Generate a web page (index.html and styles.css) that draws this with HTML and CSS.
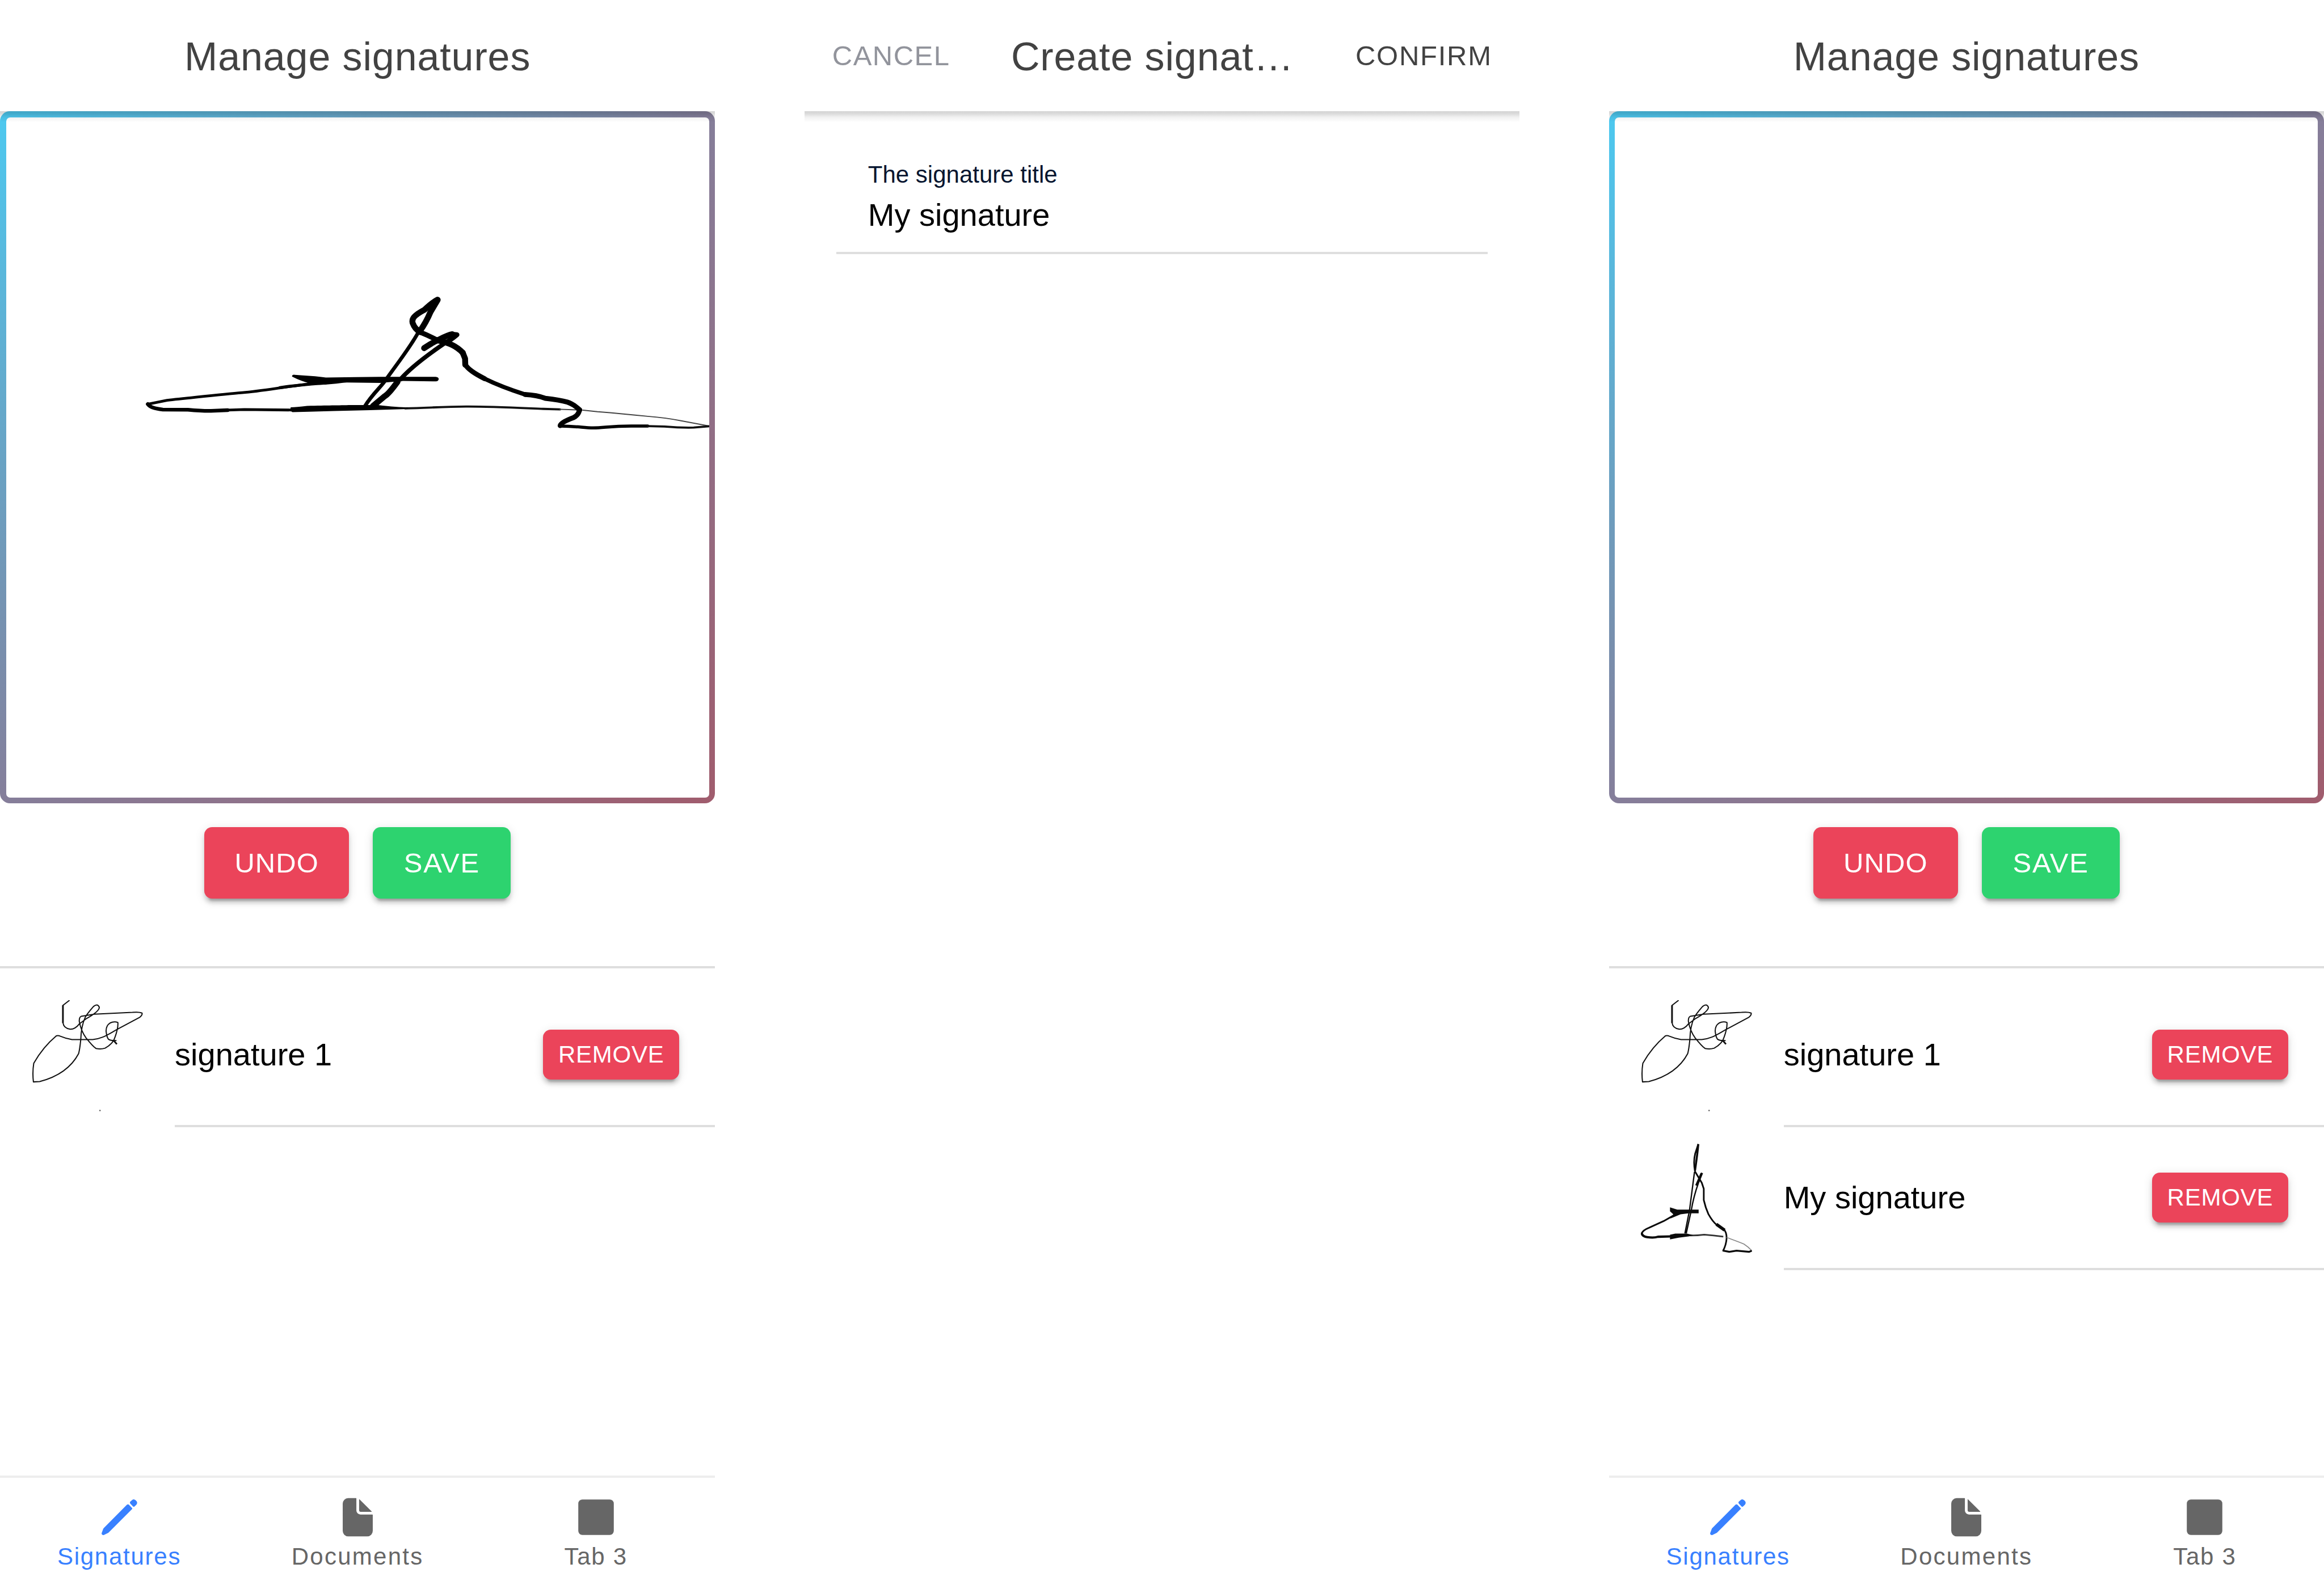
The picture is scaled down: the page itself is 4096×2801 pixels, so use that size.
FILE: index.html
```html
<!DOCTYPE html>
<html lang="en">
<head>
<meta charset="utf-8">
<title>Signatures</title>
<link rel="stylesheet" href="styles.css">
</head>
<body>
<svg class="defs" aria-hidden="true">
  <symbol id="pencil" viewBox="0 0 512 512">
    <path d="M408 51Q423 42 437 51Q448 58 455 66Q464 76 463.500 88Q462 100 454 109L433 129Q424 136 415 129L383 96Q375 86 381 75Z"/>
    <path d="M343 110Q356 99 368 109L405 149Q409 154 405 160L131 434Q128 438 122 441L74 463Q66 467 56 462Q46 455 47 443L66 392Q68 387 73 382Z"/>
  </symbol>
  <symbol id="document" viewBox="0 0 512 512">
    <path d="M428 224H288a48 48 0 01-48-48V36a4 4 0 00-4-4h-92a64 64 0 00-64 64v320a64 64 0 0064 64h224a64 64 0 0064-64V228a4 4 0 00-4-4z"/>
    <path d="M419.220 188.590L275.410 44.780a2 2 0 00-3.410 1.410V176a16 16 0 0016 16h129.810a2 2 0 001.410-3.410z"/>
  </symbol>
  <symbol id="square" viewBox="0 0 512 512">
    <path d="M416 464H96a48 48 0 01-48-48V96a48 48 0 0148-48h320a48 48 0 0148 48v320a48 48 0 01-48 48z"/>
  </symbol>
  <symbol id="sig-one" viewBox="192 162 672 672">
    <g fill="none" stroke="#111" stroke-width="7" stroke-linejoin="round">
      <path d="M420 163L381 193V300Q385 331 425 338Q455 338 480 305L520 275Q600 230 600 205Q590 180 565 200Q530 240 515 265Q490 320 488 400Q482 460 475 485C430 570 350 625 240 654L202 656Q195 600 204 543C240 480 290 420 340 378Q350 373 365 380Q400 395 435 400L560 400C620 395 650 370 715 335L845 265Q862 250 858 240Q840 232 800 236L570 247L490 260Q478 265 479 290Q490 350 520 390Q560 440 580 454Q610 460 635 452Q685 425 695 385Q715 330 712 297Q690 288 665 300Q640 315 641 350Q645 385 655 398Q670 408 704 406"/>
      <path d="M380 193V300" stroke-width="10"/>
      <path d="M684 403L706 428" stroke-width="10"/>
    </g>
    <circle cx="604" cy="829" r="4.500" fill="#666"/>
  </symbol>
  <symbol id="sig-two" viewBox="192 126 672 672">
    <g fill="none" stroke="#0a0a0a" stroke-linejoin="round">
      <path d="M539 132L520 190Q508 240 519 296" stroke-width="10"/>
      <path d="M539 132Q534 190 519 292" stroke-width="12"/>
      <path d="M518 296L560 366L572 402V470Q582 515 600 555Q625 600 650 620" stroke-width="10"/>
      <path d="M648 616L698 652" stroke-width="19"/>
      <path d="M694 648Q710 665 710 700Q708 740 688 778" stroke-width="10"/>
      <path d="M558 308L526 382M562 306L538 366" stroke-width="12"/>
      <path d="M516 300L486 530L458 672M540 366Q510 450 496 535L466 672" stroke-width="8"/>
      <path d="M395 560L330 597L240 638Q205 652 196 672" stroke-width="10"/>
      <path d="M196 668Q200 690 230 694Q270 700 295 692L370 690" stroke-width="14"/>
      <path d="M480 684Q530 685 575 679Q630 683 690 691" stroke="#333" stroke-width="9"/>
      <path d="M710 696Q790 725 815 736Q840 752 862 776" stroke="#888" stroke-width="6"/>
      <path d="M686 775L726 783L770 776L845 783L862 776" stroke-width="11"/>
    </g>
    <path d="M368 514L412 528H541V550H480L432 556L370 582L388 556L368 538ZM368 680L400 673H470L510 682L480 690L420 698L368 708Z" fill="#0a0a0a"/>
  </symbol>
</svg>

<main class="board">
  <section class="screen">
    <header class="toolbar"><h1 class="title">Manage signatures</h1></header>
    <div class="pad">
      <div class="paper">
        <svg class="ink" viewBox="12 236 1416 1370" preserveAspectRatio="none">
          <g transform="translate(260 560) scale(.42091 .33333)" fill="none" stroke="#000" stroke-linecap="round" stroke-linejoin="round">
            <path class="ink-4" d="M880 636C740 655 640 681 540 691S300 722 180 737L86 761"/>
            <path class="ink-5" d="M940 632C860 640 800 645 720 661"/>
            <path class="ink-6" d="M88 760Q100 785 160 793L280 794Q350 802 390 801L470 797"/>
            <path class="ink-4" d="M470 796L550 793L780 796"/>
            <path class="ink-3" d="M1320 786C1430 783 1500 776 1610 775S1880 784 1980 789L2060 792"/>
            <path class="ink-2" d="M2060 792L2140 795M2170 797L2240 806L2300 812L2420 827L2480 834Q2570 843 2640 861L2775 893"/>
            <path class="ink-6" d="M1128 770C1160 705 1200 660 1220 625C1290 500 1345 415 1385 320"/>
            <path class="ink-9" d="M1392 315Q1420 265 1440 205L1475 130"/>
            <path class="ink-9" d="M1473 130Q1445 150 1412 190C1360 225 1350 245 1355 270Q1365 305 1390 325"/>
            <path class="ink-8" d="M1390 325Q1430 345 1475 375"/>
            <path class="ink-9" d="M1475 375C1530 390 1565 410 1595 450"/>
            <path class="ink-9" d="M1595 450L1606 485L1607 522"/>
            <path class="ink-8" d="M1607 522Q1625 560 1700 607"/>
            <path class="ink-7" d="M1700 607Q1783 658 1893 702"/>
            <path class="ink-8" d="M1893 702Q1950 706 1990 725Q2060 735 2095 748Q2125 760 2155 796"/>
            <path class="ink-8" d="M2153 796Q2150 825 2125 842Q2065 870 2061 890"/>
            <path class="ink-5" d="M2061 893C2150 894 2170 904 2220 904S2300 893 2400 893H2480"/>
            <path class="ink-3" d="M2480 893L2560 896Q2640 904 2700 902L2775 894"/>
            <path class="ink-9" d="M1410 422Q1450 388 1480 371Q1525 342 1545 338"/>
            <path class="ink-8" d="M1540 338L1567 341Q1550 360 1520 385"/>
            <path class="ink-7" d="M1505 395C1430 460 1345 540 1297 610"/>
            <path class="ink-9" d="M1283 625Q1240 700 1222 712L1165 772"/>
            <path class="fill" d="M778 594Q778 580 792 583C840 588 900 590 940 600L1080 597L1200 595H1465Q1480 597 1480 609Q1478 622 1466 623L1310 620L1200 632L1040 630C980 636 940 648 880 642Q820 622 778 594Z"/>
            <path class="fill" d="M772 780Q800 778 850 771C950 768 1000 768 1060 766H1190C1250 776 1300 778 1335 781L1330 790L1150 797L980 802L860 806L780 809Q766 800 772 780Z"/>
          </g>
        </svg>
      </div>
    </div>
    <div class="actions">
      <button class="btn btn-undo">UNDO</button>
      <button class="btn btn-save">SAVE</button>
    </div>
    <ul class="list">
      <li class="item">
        <svg class="thumb"><use href="#sig-one"/></svg>
        <div class="item-inner"><span class="item-label">signature 1</span><button class="btn btn-small">REMOVE</button></div>
      </li>
    </ul>
    <nav class="tabs">
      <a class="tab tab-active"><svg class="icon"><use href="#pencil"/></svg><span>Signatures</span></a>
      <a class="tab"><svg class="icon"><use href="#document"/></svg><span class="wide">Documents</span></a>
      <a class="tab"><svg class="icon"><use href="#square"/></svg><span>Tab 3</span></a>
    </nav>
  </section>

  <section class="screen">
    <header class="toolbar toolbar-modal">
      <button class="link link-cancel">CANCEL</button>
      <h1 class="title title-clip">Create signat…</h1>
      <button class="link link-confirm">CONFIRM</button>
    </header>
    <div class="form">
      <label class="field">
        <span class="field-label">The signature title</span>
        <span class="field-value">My signature</span>
      </label>
    </div>
  </section>

  <section class="screen">
    <header class="toolbar"><h1 class="title">Manage signatures</h1></header>
    <div class="pad"><div class="paper"></div></div>
    <div class="actions">
      <button class="btn btn-undo">UNDO</button>
      <button class="btn btn-save">SAVE</button>
    </div>
    <ul class="list">
      <li class="item">
        <svg class="thumb"><use href="#sig-one"/></svg>
        <div class="item-inner"><span class="item-label">signature 1</span><button class="btn btn-small">REMOVE</button></div>
      </li>
      <li class="item">
        <svg class="thumb"><use href="#sig-two"/></svg>
        <div class="item-inner"><span class="item-label">My signature</span><button class="btn btn-small">REMOVE</button></div>
      </li>
    </ul>
    <nav class="tabs">
      <a class="tab tab-active"><svg class="icon"><use href="#pencil"/></svg><span>Signatures</span></a>
      <a class="tab"><svg class="icon"><use href="#document"/></svg><span class="wide">Documents</span></a>
      <a class="tab"><svg class="icon"><use href="#square"/></svg><span>Tab 3</span></a>
    </nav>
  </section>
</main>
</body>
</html>
```
FILE: styles.css
```css
/* 1rem is one device-independent pixel of a 360x800 phone screen */
html {
  font-size: 3.50085px;
}

* {
  box-sizing: border-box;
}

body {
  margin: 0;
  background: #fff;
  color: #000;
  font-family: Arial, "Liberation Sans", sans-serif;
  overflow: hidden;
}

button {
  font-family: inherit;
  border: 0;
  padding: 0;
  margin: 0;
  background: none;
}

.defs {
  display: none;
}

.board {
  display: flex;
  gap: 45rem;
  width: 4096px;
  height: 2801px;
}

.screen {
  display: flex;
  flex-direction: column;
  flex: none;
  width: 360rem;
  height: 800rem;
}

/* header */
.toolbar {
  position: relative;
  display: flex;
  align-items: center;
  justify-content: center;
  flex: none;
  height: 56rem;
}

.toolbar::after {
  content: "";
  position: absolute;
  top: 100%;
  left: 0;
  width: 100%;
  height: 5rem;
  z-index: 1;
  background: linear-gradient(rgba(0, 0, 0, .17), rgba(0, 0, 0, .14) 25%, rgba(0, 0, 0, .05) 60%, rgba(0, 0, 0, .01));
}

.title {
  margin: 0;
  padding-top: 1rem;
  font-size: 20rem;
  line-height: 24rem;
  font-weight: 400;
  letter-spacing: .25rem;
  color: #424242;
  white-space: nowrap;
}

.toolbar-modal {
  justify-content: flex-start;
  padding-left: 14rem;
}

.title-clip {
  width: 173.400rem;
  margin-left: 31rem;
}

.link {
  font-size: 14rem;
  line-height: 18rem;
  letter-spacing: .5rem;
  text-align: left;
  white-space: nowrap;
}

.link-cancel {
  width: 59rem;
  letter-spacing: .42rem;
  color: #92949c;
}

.link-confirm {
  color: #424242;
}

/* drawing area */
.pad {
  flex: none;
  height: 348.500rem;
  padding: 3rem;
  border-radius: 5rem;
  background: linear-gradient(to bottom right, #4cc9f0, #857e9a 50%, #a05c6d);
}

.paper {
  height: 100%;
  border-radius: 2rem;
  background: #fff;
  overflow: hidden;
}

.ink {
  display: block;
  width: 100%;
  height: 100%;
}

.ink path {
  vector-effect: non-scaling-stroke;
}

.ink .ink-2 { stroke-width: 2px; stroke: #444; }
.ink .ink-3 { stroke-width: 3.800px; stroke: #111; }
.ink .ink-4 { stroke-width: 4.800px; }
.ink .ink-5 { stroke-width: 5.500px; }
.ink .ink-6 { stroke-width: 6.500px; }
.ink .ink-7 { stroke-width: 7.500px; }
.ink .ink-8 { stroke-width: 8.800px; }
.ink .ink-9 { stroke-width: 10.400px; }
.ink .fill { fill: #000; stroke: none; }

/* buttons */
.actions {
  display: flex;
  justify-content: center;
  gap: 12rem;
  flex: none;
  padding-top: 12rem;
  height: 82rem;
}

.btn {
  height: 36rem;
  border-radius: 4rem;
  background: #eb445a;
  color: #fff;
  font-size: 14rem;
  line-height: 36rem;
  letter-spacing: .5rem;
  text-align: center;
  white-space: nowrap;
  box-shadow: 0 3rem 1rem -2rem rgba(0, 0, 0, .2), 0 2rem 2rem 0 rgba(0, 0, 0, .14), 0 1rem 5rem 0 rgba(0, 0, 0, .12);
}

.btn-undo {
  width: 73rem;
  letter-spacing: .3rem;
}

.btn-save {
  width: 69.400rem;
  background: #2dd36f;
}

.btn-small {
  width: 68.600rem;
  height: 25rem;
  font-size: 12rem;
  line-height: 25rem;
  letter-spacing: .22rem;
}

/* saved signatures */
.list {
  flex: 1;
  margin: 0;
  padding: 9rem 0 0;
  list-style: none;
  background: linear-gradient(#dedede, #dedede) top / 100% 4px no-repeat;
}

.item {
  display: flex;
  align-items: center;
  height: 72rem;
  padding-left: 16rem;
}

.thumb {
  flex: none;
  width: 56rem;
  height: 56rem;
  margin-right: 16rem;
}

.item-inner {
  display: flex;
  align-items: center;
  justify-content: space-between;
  flex: 1;
  height: 100%;
  padding: 0 18rem 1rem 0;
  background: linear-gradient(#dedede, #dedede) bottom / 100% 4px no-repeat;
}

.item-label {
  font-size: 16rem;
  line-height: 20rem;
}

/* bottom tabs */
.tabs {
  display: flex;
  flex: none;
  height: 57rem;
  padding-top: 1rem;
  background: linear-gradient(#ededed, #ededed) top / 100% 4px no-repeat;
}

.tab {
  display: flex;
  flex: 1;
  flex-direction: column;
  align-items: center;
  padding-top: 9rem;
  color: #666;
  font-size: 12rem;
  line-height: 14rem;
  letter-spacing: .5rem;
}

.tab .wide {
  letter-spacing: .650rem;
}

.tab-active {
  color: #3880ff;
}

.icon {
  width: 22rem;
  height: 22rem;
  margin-bottom: 1.700rem;
  fill: currentColor;
}

/* title form */
.form {
  padding: 24rem 16rem 0;
}

.field {
  display: flex;
  flex-direction: column;
  height: 48rem;
  padding-left: 16rem;
  background: linear-gradient(#dedede, #dedede) bottom / 100% 4px no-repeat;
}

.field-label {
  font-size: 12rem;
  line-height: 16rem;
  color: #06152f;
}

.field-value {
  margin-top: 2.400rem;
  font-size: 16rem;
  line-height: 20rem;
}
```
